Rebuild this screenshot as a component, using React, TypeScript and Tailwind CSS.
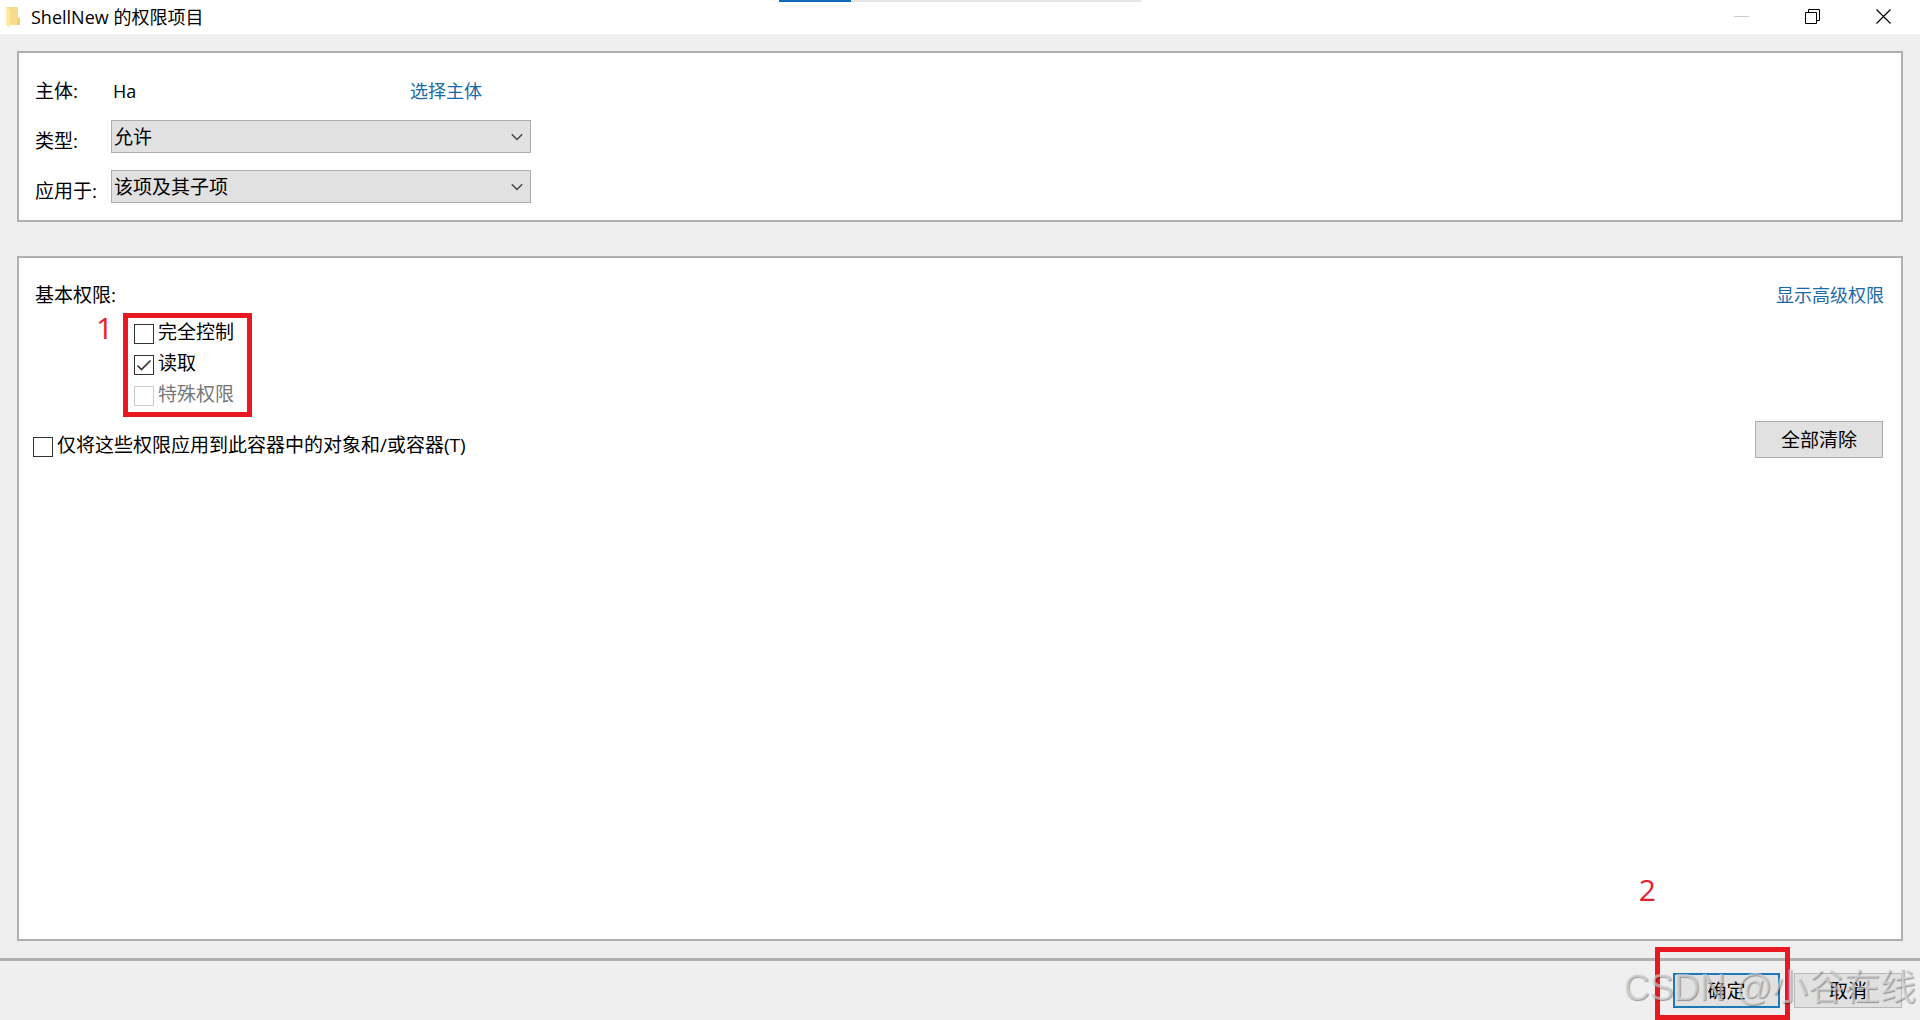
import React from "react";

const text = "text-[19px] leading-6 whitespace-nowrap";

function Choice({ id, label, options }: { id: string; label: string; options: string[] }) {
  return (
    <div className="flex items-start">
      <label htmlFor={id} className={`${text} mt-[9px] w-[76px]`}>{label}</label>
      <div className="relative w-[420px]">
        <select id={id} className="h-[33px] w-full appearance-none border border-[#adadad] bg-[#e1e1e1] pl-[2px] pr-8 text-[19px] leading-6 outline-none">
          {options.map((o) => <option key={o}>{o}</option>)}
        </select>
        <svg viewBox="0 0 12 8" className="pointer-events-none absolute right-2 top-[13px] h-2 w-3" fill="none" stroke="#444" strokeWidth="1.4">
          <path d="M.8 1.2 6 6.4l5.2-5.2" />
        </svg>
      </div>
    </div>
  );
}

function Check({ label, checked, disabled }: { label: string; checked?: boolean; disabled?: boolean }) {
  return (
    <label className={`${text} flex items-start gap-1 ${disabled ? "text-[#777]" : ""}`}>
      <span className="relative mt-1 h-5 w-5">
        <input
          type="checkbox"
          defaultChecked={checked}
          disabled={disabled}
          className="peer block h-5 w-5 appearance-none border border-[#333] bg-white disabled:border-[#ccc]"
        />
        <svg viewBox="0 0 20 20" className="pointer-events-none absolute inset-0 hidden h-5 w-5 peer-checked:block" fill="none" stroke="#333" strokeWidth="1.6">
          <path d="m3.5 10.5 4 4 9-9" />
        </svg>
      </span>
      {label}
    </label>
  );
}

export default function App() {
  return (
    <main className="relative flex min-h-screen flex-col overflow-hidden bg-[#efefef] font-['Open_Sans','Noto_Sans_CJK_SC',sans-serif] text-black">
      <header className="relative flex h-[34px] items-center bg-white">
        <svg viewBox="0 0 16 22" className="ml-[5px] h-[22px] w-4">
          <path d="M1 1h12v10l2 2v6H1z" fill="#f6dc8c" />
          <path d="M13 11l2 2v6h-3z" fill="#f0cf6c" />
          <path d="M1 1l4 3v18l-4-3z" fill="#fdeaa8" />
        </svg>
        <h1 className="ml-[10px] text-[18px] leading-6">ShellNew 的权限项目</h1>
        <div className="absolute left-1/2 top-0 flex h-0.5 w-[362px] -translate-x-1/2 bg-[#e5e5e5]">
          <span className="w-[72px] bg-[#0f6cbd]" />
        </div>
        <div className="ml-auto mr-7 flex items-center gap-[55px]">
          <button aria-label="最小化" className="h-4 w-4">
            <svg viewBox="0 0 16 16" className="h-4 w-4" stroke="#ccc"><path d="M0 7.5h15" /></svg>
          </button>
          <button aria-label="还原" className="h-4 w-4">
            <svg viewBox="0 0 16 16" className="h-4 w-4" fill="none" stroke="#000">
              <path d="M.5 3.5h11v11H.5zM3.5 3.5v-3h11v11h-3" />
            </svg>
          </button>
          <button aria-label="关闭" className="h-4 w-4">
            <svg viewBox="0 0 16 16" className="h-4 w-4" stroke="#000" strokeWidth="1.2"><path d="m.5.5 14 14m0-14-14 14" /></svg>
          </button>
        </div>
      </header>

      <section className="mx-[17px] mt-[17px] flex flex-col gap-[17px] border-2 border-[#b0b0b0] bg-white pb-[17px] pl-4 pr-[17px] pt-[26px]">
        <div className="flex items-center">
          <span className={`${text} w-[78px]`}>主体:</span>
          <span className="w-[297px] text-[18px] leading-6">Ha</span>
          <a href="#principal" className="text-[18px] leading-6 text-[#1a69a8]">选择主体</a>
        </div>
        <Choice id="type" label="类型:" options={["允许", "拒绝"]} />
        <Choice id="scope" label="应用于:" options={["该项及其子项", "只是该项", "只是子项"]} />
      </section>

      <section className="relative mx-[17px] mb-[17px] mt-[34px] flex-1 border-2 border-[#b0b0b0] bg-white pl-[14px] pr-[17px] pt-[25px]">
        <div className="flex justify-between pl-[2px]">
          <h2 className={text}>基本权限:</h2>
          <a href="#advanced" className="text-[18px] leading-6 text-[#1a69a8]">显示高级权限</a>
        </div>
        <div className="mt-[6px] flex items-start">
          <span className="ml-[63px] w-[27px] text-[30px] leading-[30px] text-[#e5202a]">1</span>
          <div className="flex h-[104px] w-[129px] flex-col gap-[7px] border-[5px] border-[#e81820] pl-[6px] pt-[2px]">
            <Check label="完全控制" />
            <Check label="读取" checked />
            <Check label="特殊权限" disabled />
          </div>
        </div>
        <div className="mt-1 flex items-start justify-between pr-px">
          <div className="mt-3"><Check label="仅将这些权限应用到此容器中的对象和/或容器(T)" /></div>
          <button className={`${text} h-[37px] w-32 border border-[#adadad] bg-[#e1e1e1]`}>全部清除</button>
        </div>
        <span className="absolute bottom-[34px] right-[245px] text-[30px] leading-[30px] text-[#e5202a]">2</span>
      </section>

      <footer className="relative flex h-[62px] items-start justify-end gap-[14px] border-t-[3px] border-[#b0b0b0] pr-[18px] pt-3">
        <button className={`${text} h-[35px] w-[107px] border-2 border-[#1979b9] bg-[#e1e1e1]`}>确定</button>
        <button className={`${text} h-[35px] w-[108px] border border-[#b8b8b8] bg-[#e1e1e1]`}>取消</button>
        <span className="pointer-events-none absolute -top-[14px] right-[130px] h-[73px] w-[135px] border-[5px] border-[#e81820]" />
        <span className="pointer-events-none absolute right-1 top-[3px] whitespace-nowrap font-['Liberation_Sans','Noto_Sans_CJK_SC',sans-serif] text-[36px] leading-[48px] text-[#e8e8e8]/60 [text-shadow:1px_1px_1px_rgba(0,0,0,0.35)]">CSDN @小谷在线</span>
      </footer>
    </main>
  );
}
